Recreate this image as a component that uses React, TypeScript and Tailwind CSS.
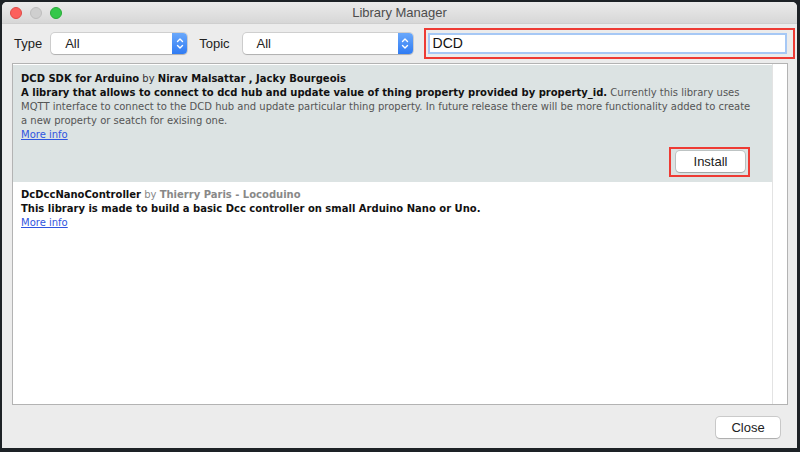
import React from "react";

const sysFont = { fontFamily: '"Liberation Sans", "Noto Sans", Arial, sans-serif' };
const listFont = { fontFamily: '"DejaVu Sans", Verdana, sans-serif' };

function Stepper() {
  return (
    <div className="flex h-full w-[15px] items-center justify-center rounded-r-[4px] bg-gradient-to-b from-[#6aa8fb] to-[#2f7bf3]">
      <svg width="8" height="13" viewBox="0 0 8 13" fill="none" stroke="white" strokeWidth="1.4" strokeLinecap="round" strokeLinejoin="round">
        <path d="M1.5 4.5 L4 2 L6.5 4.5" />
        <path d="M1.5 8.5 L4 11 L6.5 8.5" />
      </svg>
    </div>
  );
}

function Select({ width, value }: { width: string; value: string }) {
  return (
    <div className={`flex h-[21px] items-center rounded-[4px] bg-white shadow-[0_0_0_1px_rgba(0,0,0,0.12),0_1px_1px_rgba(0,0,0,0.15)] ${width}`}>
      <span className="flex-1 pl-[14px] text-[13px] text-[#222]">{value}</span>
      <Stepper />
    </div>
  );
}

function MoreInfo() {
  return <span className="text-[#2f55e0] underline">More info</span>;
}

export default function App() {
  return (
    <div className="flex h-[452px] w-[800px] bg-[#1d2226] pt-[2px] pl-[2px] pr-[3px] pb-[4px]" style={sysFont}>
      <div className="flex flex-1 flex-col overflow-hidden rounded-t-[5px] bg-[#ececec]">
        {/* Title bar */}
        <div className="relative flex h-[22px] items-center justify-center border-b border-[#cfcfcf] bg-gradient-to-b from-[#ebebeb] to-[#d7d7d7]">
          <div className="absolute left-[8px] top-[5px] flex gap-[8px]">
            <span className="h-[12px] w-[12px] rounded-full bg-[#fc605c] border border-[#de4a46]" />
            <span className="h-[12px] w-[12px] rounded-full bg-[#cfcfcf] border border-[#bdbdbd]" />
            <span className="h-[12px] w-[12px] rounded-full bg-[#34c84a] border border-[#27aa37]" />
          </div>
          <span className="text-[13px] text-[#4d4d4d]">Library Manager</span>
        </div>

        {/* Toolbar */}
        <div className="mt-[4px] flex h-[31px] items-center pl-[12px] pr-[2px]">
          <span className="text-[13px] text-[#222]">Type</span>
          <div className="ml-[9px]">
            <Select width="w-[136px]" value="All" />
          </div>
          <span className="ml-[12px] text-[13px] text-[#222]">Topic</span>
          <div className="ml-[13px]">
            <Select width="w-[170px]" value="All" />
          </div>
          <div className="ml-[11px] flex h-[31px] flex-1 items-center border-2 border-[#ee3b34] pl-[2px] pr-[6px]">
            <div className="flex h-[21px] flex-1 items-center border-2 border-[#a6c8f5] bg-white pl-[3px] text-[14px] text-[#111]">
              DCD
            </div>
          </div>
        </div>

        {/* List */}
        <div className="ml-[10px] mt-[4px] flex h-[342px] w-[776px] border border-[#b3b3b3] bg-white" style={listFont}>
          <div className="flex flex-1 flex-col pt-[1px] text-[10px] leading-[14px]">
            <div className="flex h-[117px] flex-col bg-[#dce3e3] pl-[8px] pr-[14px] pt-[7px]">
              <div className="text-[#111]">
                <b>DCD SDK for Arduino</b> <span className="text-[#333]">by</span>{" "}
                <b>Nirav Malsattar , Jacky Bourgeois</b>
              </div>
              <div className="text-[#555]">
                <b className="text-[#111]">
                  A library that allows to connect to dcd hub and update value of thing property provided by property_id.
                </b>{" "}
                Currently this library uses MQTT interface to connect to the DCD hub and update particular thing property. In future release there will be more functionality added to create a new property or seatch for exising one.
              </div>
              <div>
                <MoreInfo />
              </div>
              <div className="mt-[5px] flex justify-end pr-[8px]">
                <div className="border-2 border-[#ee3b34] pb-[3px] pl-[5px] pr-[3px] pt-[2px]">
                  <button
                    className="h-[21px] w-[69px] rounded-[4px] bg-white text-[13px] text-[#222] shadow-[0_0_0_1px_rgba(0,0,0,0.14),0_1px_1px_rgba(0,0,0,0.15)]"
                    style={sysFont}
                  >
                    Install
                  </button>
                </div>
              </div>
            </div>
            <div className="flex flex-col pl-[8px] pt-[6px]">
              <div className="text-[#111]">
                <b>DcDccNanoController</b> <span className="text-[#888]">by</span>{" "}
                <b className="text-[#888]">Thierry Paris - Locoduino</b>
              </div>
              <div>
                <b className="text-[#111]">This library is made to build a basic Dcc controller on small Arduino Nano or Uno.</b>
              </div>
              <div>
                <MoreInfo />
              </div>
            </div>
          </div>
          <div className="w-[15px] border-l border-[#e3e3e3] bg-white" />
        </div>

        {/* Bottom bar */}
        <div className="flex flex-1 items-start justify-end pr-[17px] pt-[12px]">
          <button className="h-[21px] w-[64px] rounded-[4px] bg-white text-[13px] text-[#222] shadow-[0_0_0_1px_rgba(0,0,0,0.14),0_1px_1px_rgba(0,0,0,0.15)]">
            Close
          </button>
        </div>
      </div>
    </div>
  );
}
